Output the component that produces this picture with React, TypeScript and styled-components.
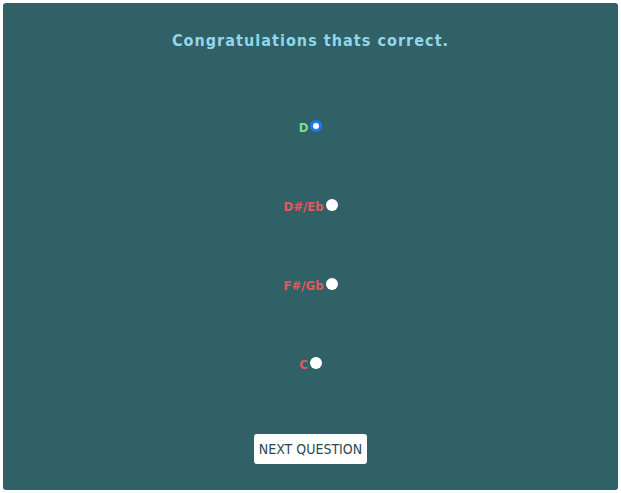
import React, { useState } from "react";
import styled, { createGlobalStyle } from "styled-components";

const Global = createGlobalStyle`
  html, body { margin: 0; padding: 0; background: #ffffff; }
  body { font-family: "DejaVu Sans Condensed", "DejaVu Sans", sans-serif; }
`;

const Page = styled.div`
  padding: 3px;
  width: 621px;
  height: 493px;
  box-sizing: border-box;
`;

const Panel = styled.div`
  background: #2f6167;
  border-radius: 3px;
  height: 487px;
  box-sizing: border-box;
  padding-top: 28px;
  display: flex;
  flex-direction: column;
  align-items: center;
`;

const Title = styled.h1`
  margin: 0;
  font-size: 16px;
  line-height: 20px;
  font-weight: bold;
  letter-spacing: 1.05px;
  color: #93d5ea;
`;

const Options = styled.div`
  margin-top: 68px;
  display: flex;
  flex-direction: column;
  align-items: center;
  gap: 63px;
`;

const Option = styled.label`
  display: flex;
  align-items: center;
  gap: 2px;
  height: 16px;
  cursor: pointer;
`;

const Label = styled.span<{ $correct: boolean }>`
  font-size: 13px;
  font-weight: bold;
  color: ${(p) => (p.$correct ? "#7fdc85" : "#e05a5c")};
`;

const Radio = styled.span<{ $checked: boolean }>`
  width: 12px;
  height: 12px;
  box-sizing: border-box;
  border-radius: 50%;
  background: #ffffff;
  border: ${(p) => (p.$checked ? "3px solid #1a7cf0" : "none")};
  margin-top: -2px;
`;

const Button = styled.button`
  margin-top: 62px;
  background: #ffffff;
  border: none;
  border-radius: 3px;
  height: 30px;
  padding: 0 5px;
  font-family: "DejaVu Sans Condensed", "DejaVu Sans", sans-serif;
  font-size: 14px;
  color: #2b4a50;
  cursor: pointer;
`;

const choices = ["D", "D#/Eb", "F#/Gb", "C"];

export default function App() {
  const [selected] = useState("D");
  return (
    <Page>
      <Global />
      <Panel>
        <Title>Congratulations thats correct.</Title>
        <Options>
          {choices.map((c) => (
            <Option key={c}>
              <Label $correct={c === "D"}>{c}</Label>
              <Radio $checked={c === selected} />
            </Option>
          ))}
        </Options>
        <Button>NEXT QUESTION</Button>
      </Panel>
    </Page>
  );
}
